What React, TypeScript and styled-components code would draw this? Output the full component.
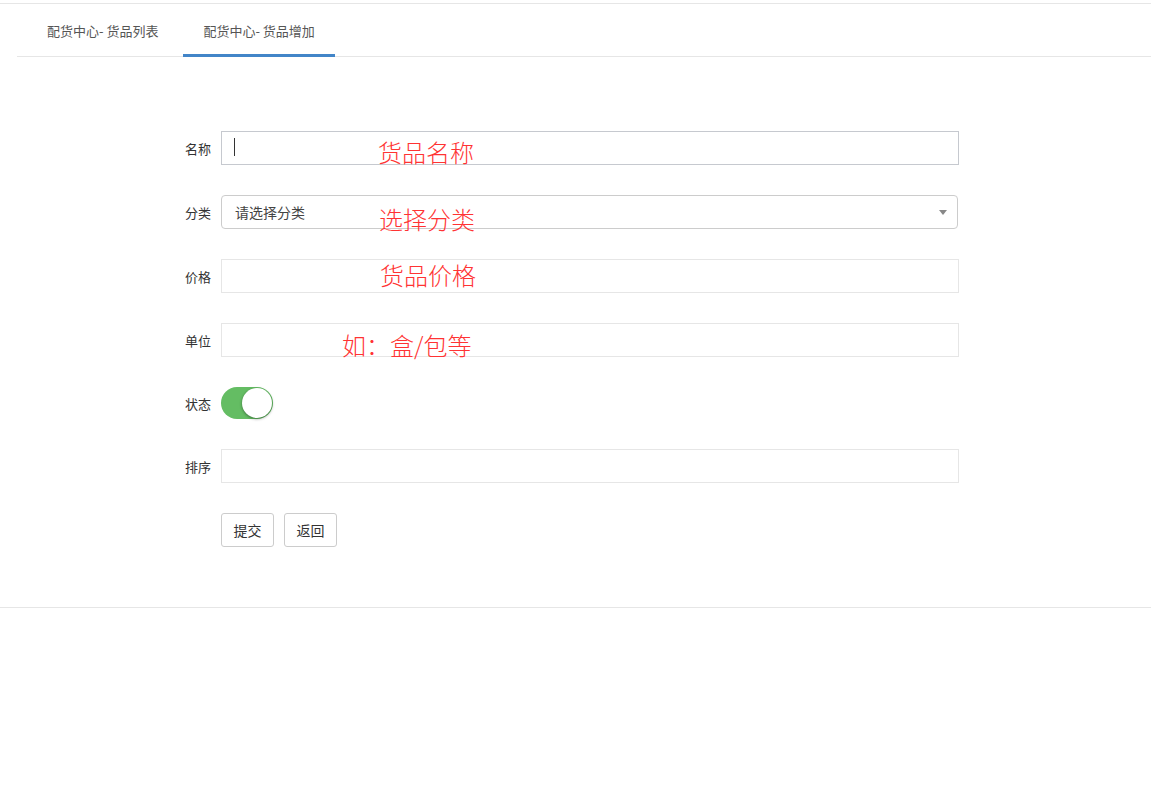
import { createGlobalStyle, styled } from 'styled-components';

const GlobalStyle = createGlobalStyle`
  html, body {
    margin: 0;
    padding: 0;
    background: #fff;
    font-family: "Noto Sans CJK SC", "Noto Sans", sans-serif;
    color: #333;
  }
  * { box-sizing: border-box; }
`;

const Page = styled.div`
  margin-top: 3px;
  border-top: 1px solid #e6e6e6;
`;

const TabBar = styled.ul`
  display: flex;
  margin: 0 0 0 17px;
  padding: 0 0 0 10px;
  list-style: none;
  border-bottom: 1px solid #e6e6e6;
  height: 53px;
  align-items: flex-end;
`;

const Tab = styled.li<{ $active?: boolean }>`
  height: 100%;
  display: flex;
  align-items: center;
  padding: 2px 20px 0;
  margin-right: 5px;
  font-size: 13px;
  color: #555;
  border-bottom: 3px solid ${(p) => (p.$active ? '#4285c8' : 'transparent')};
  margin-bottom: -1px;
  cursor: pointer;
`;

const Form = styled.form`
  display: flex;
  flex-direction: column;
  gap: 30px;
  padding: 74px 0 60px;
  border-bottom: 1px solid #e6e6e6;
`;

const Row = styled.div`
  display: grid;
  grid-template-columns: 211px 738px;
  column-gap: 10px;
  align-items: center;
`;

const Label = styled.label`
  text-align: right;
  font-size: 13px;
  color: #333;
`;

const Field = styled.div`
  position: relative;
  height: 34px;
`;

const TextInput = styled.input<{ $strong?: boolean }>`
  width: 100%;
  height: 34px;
  border: 1px solid ${(p) => (p.$strong ? '#c6c9cf' : '#e6e6e6')};
  border-radius: 0;
  padding: 0 12px;
  font-size: 14px;
  font-family: inherit;
  outline: none;
  background: #fff;
`;

const Caret = styled.span`
  position: absolute;
  left: 13px;
  top: 7px;
  width: 1px;
  height: 18px;
  background: #333;
`;

const Select = styled.div`
  height: 34px;
  border: 1px solid #ccc;
  border-radius: 4px;
  padding: 0 13px;
  display: flex;
  align-items: center;
  justify-content: space-between;
  font-size: 14px;
  color: #444;
  margin-right: 1px;
`;

const Arrow = styled.span`
  width: 0;
  height: 0;
  border-left: 4px solid transparent;
  border-right: 4px solid transparent;
  border-top: 5px solid #888;
  margin-right: -3px;
`;

const Note = styled.span<{ $left: number; $top: number }>`
  position: absolute;
  left: ${(p) => p.$left}px;
  top: ${(p) => p.$top}px;
  font-size: 24px;
  font-weight: 300;
  line-height: 1;
  color: #ff3333;
  white-space: nowrap;
  pointer-events: none;
`;

const Switch = styled.div`
  width: 52px;
  height: 32px;
  border-radius: 16px;
  background: #64bd63;
  position: relative;
  &::after {
    content: '';
    position: absolute;
    right: 1px;
    top: 1px;
    width: 30px;
    height: 30px;
    border-radius: 50%;
    background: #fff;
    box-shadow: 0 1px 3px rgba(0, 0, 0, 0.4);
  }
`;

const Buttons = styled.div`
  display: flex;
  gap: 10px;
`;

const Button = styled.button`
  width: 53px;
  height: 34px;
  padding: 0;
  background: #fff;
  border: 1px solid #ccc;
  border-radius: 3px;
  font-size: 14px;
  font-family: inherit;
  color: #333;
`;

export default function App() {
  return (
    <Page>
      <GlobalStyle />
      <TabBar>
        <Tab>配货中心- 货品列表</Tab>
        <Tab $active>配货中心- 货品增加</Tab>
      </TabBar>
      <Form onSubmit={(e) => e.preventDefault()}>
        <Row>
          <Label>名称</Label>
          <Field>
            <TextInput $strong />
            <Caret />
            <Note $left={157} $top={9}>货品名称</Note>
          </Field>
        </Row>
        <Row>
          <Label>分类</Label>
          <Field>
            <Select>
              请选择分类
              <Arrow />
            </Select>
            <Note $left={158} $top={12}>选择分类</Note>
          </Field>
        </Row>
        <Row>
          <Label>价格</Label>
          <Field>
            <TextInput />
            <Note $left={159} $top={4}>货品价格</Note>
          </Field>
        </Row>
        <Row>
          <Label>单位</Label>
          <Field>
            <TextInput />
            <Note $left={121} $top={10}>如：盒/包等</Note>
          </Field>
        </Row>
        <Row>
          <Label>状态</Label>
          <Switch />
        </Row>
        <Row>
          <Label>排序</Label>
          <Field>
            <TextInput />
          </Field>
        </Row>
        <Row>
          <span />
          <Buttons>
            <Button type="submit">提交</Button>
            <Button type="button">返回</Button>
          </Buttons>
        </Row>
      </Form>
    </Page>
  );
}
